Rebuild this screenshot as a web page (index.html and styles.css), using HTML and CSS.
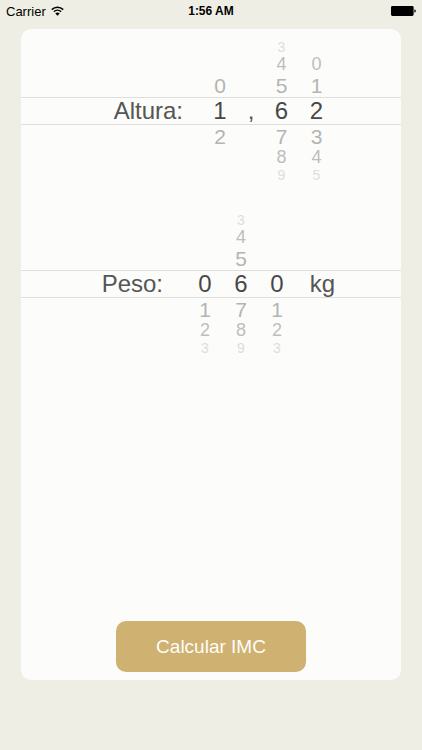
FILE: index.html
```html
<!DOCTYPE html>
<html lang="pt">
<head>
  <meta charset="UTF-8"/>
  <meta name="viewport" content="width=device-width, initial-scale=1.0"/>
  <title>Calcular IMC</title>
  <link rel="stylesheet" href="styles.css">
</head>
<body>

  <!-- Status bar -->
  <header class="status-bar">
    <div class="carrier">
      <span>Carrier</span>
      <svg class="wifi" viewBox="0 0 13 10" aria-hidden="true">
        <path d="M0.8 3.6 A8.2 8.2 0 0 1 12.2 3.6" fill="none" stroke="#000" stroke-width="1.6"/>
        <path d="M2.9 5.8 A5.2 5.2 0 0 1 10.1 5.8" fill="none" stroke="#000" stroke-width="1.5"/>
        <path d="M6.5 9.8 L4.3 7.5 A3.2 3.2 0 0 1 8.7 7.5 Z"/>
      </svg>
    </div>
    <time class="clock">1:56 AM</time>
    <svg class="battery" viewBox="0 0 25 10" aria-hidden="true">
      <rect x="0" y="0" width="22.6" height="10" rx="1.4"/>
      <path d="M23.4 3.2 Q24.9 3.7 24.9 5 Q24.9 6.3 23.4 6.8 Z"/>
    </svg>
  </header>

  <!-- Main Content -->
  <main>
    <form class="card">
      <div class="picker height-picker" role="group" aria-labelledby="alturaLabel">
        <div class="band"></div>
        <span class="name" id="alturaLabel">Altura:</span>
        <div class="wheel col-3" role="radiogroup" aria-label="Metros">
          <label class="up1"><input type="radio" name="m" value="0">0</label>
          <label class="current"><input type="radio" name="m" value="1" checked>1</label>
          <label class="down1"><input type="radio" name="m" value="2">2</label>
        </div>
        <span class="comma">,</span>
        <div class="wheel col-5" role="radiogroup" aria-label="Decímetros">
          <label class="up3"><input type="radio" name="dm" value="3">3</label>
          <label class="up2"><input type="radio" name="dm" value="4">4</label>
          <label class="up1"><input type="radio" name="dm" value="5">5</label>
          <label class="current"><input type="radio" name="dm" value="6" checked>6</label>
          <label class="down1"><input type="radio" name="dm" value="7">7</label>
          <label class="down2"><input type="radio" name="dm" value="8">8</label>
          <label class="down3"><input type="radio" name="dm" value="9">9</label>
        </div>
        <div class="wheel col-6" role="radiogroup" aria-label="Centímetros">
          <label class="up2"><input type="radio" name="cm" value="0">0</label>
          <label class="up1"><input type="radio" name="cm" value="1">1</label>
          <label class="current"><input type="radio" name="cm" value="2" checked>2</label>
          <label class="down1"><input type="radio" name="cm" value="3">3</label>
          <label class="down2"><input type="radio" name="cm" value="4">4</label>
          <label class="down3"><input type="radio" name="cm" value="5">5</label>
        </div>
      </div>

      <div class="picker weight-picker" role="group" aria-labelledby="pesoLabel">
        <div class="band"></div>
        <span class="name" id="pesoLabel">Peso:</span>
        <div class="wheel col-3" role="radiogroup" aria-label="Centenas">
          <label class="current"><input type="radio" name="kg100" value="0" checked>0</label>
          <label class="down1"><input type="radio" name="kg100" value="1">1</label>
          <label class="down2"><input type="radio" name="kg100" value="2">2</label>
          <label class="down3"><input type="radio" name="kg100" value="3">3</label>
        </div>
        <div class="wheel col-4" role="radiogroup" aria-label="Dezenas">
          <label class="up3"><input type="radio" name="kg10" value="3">3</label>
          <label class="up2"><input type="radio" name="kg10" value="4">4</label>
          <label class="up1"><input type="radio" name="kg10" value="5">5</label>
          <label class="current"><input type="radio" name="kg10" value="6" checked>6</label>
          <label class="down1"><input type="radio" name="kg10" value="7">7</label>
          <label class="down2"><input type="radio" name="kg10" value="8">8</label>
          <label class="down3"><input type="radio" name="kg10" value="9">9</label>
        </div>
        <div class="wheel col-5" role="radiogroup" aria-label="Unidades">
          <label class="current"><input type="radio" name="kg1" value="0" checked>0</label>
          <label class="down1"><input type="radio" name="kg1" value="1">1</label>
          <label class="down2"><input type="radio" name="kg1" value="2">2</label>
          <label class="down3"><input type="radio" name="kg1" value="3">3</label>
        </div>
        <span class="unit">kg</span>
      </div>

      <button type="button" class="calc-btn">Calcular IMC</button>
    </form>
  </main>

</body>
</html>
```
FILE: styles.css
```css
* {
  margin: 0;
  padding: 0;
  box-sizing: border-box;
  font-family: 'Liberation Sans', Arial, sans-serif;
}

body {
  min-height: 100vh;
  display: flex;
  flex-direction: column;
  background-color: #eeeee4;
  color: #555;
}

.status-bar {
  display: grid;
  grid-template-columns: 1fr auto 1fr;
  align-items: center;
  height: 22px;
  padding: 0 6px;
  color: #000;
}

.carrier {
  display: flex;
  align-items: center;
  gap: 5px;
  font-size: 13px;
}

.wifi {
  width: 13px;
  height: 10px;
}

.clock {
  font-size: 12px;
  font-weight: bold;
}

.battery {
  width: 25px;
  height: 10px;
  justify-self: end;
}

main {
  flex: 1;
  display: flex;
  padding: 7px 21px 70px;
}

.card {
  flex: 1;
  display: flex;
  flex-direction: column;
  gap: 29px;
  padding: 10px 0 8px;
  border-radius: 10px;
  background-color: #fcfcfa;
}

/* seven rows, getting shorter away from the selected one */
.picker {
  display: grid;
  grid-template-rows: 16px 19px 23px 28px 23px 19px 16px;
  font-size: 24px;
  line-height: 28px;
}

.height-picker {
  grid-template-columns: 1fr 114px 36px 26px 35px 35px 1fr;
}

.weight-picker {
  grid-template-columns: 1fr 100px 36px 36px 36px 40px 1fr;
}

.band {
  grid-row: 4;
  grid-column: 1 / -1;
  border-top: 1px solid #dededc;
  border-bottom: 1px solid #dededc;
}

.name {
  grid-row: 4;
  grid-column: 2;
  text-align: right;
}

.height-picker .name {
  padding-right: 19px;
}

.weight-picker .name {
  padding-right: 24px;
}

.comma {
  grid-row: 4;
  grid-column: 4;
  text-align: center;
}

.unit {
  grid-row: 4;
  grid-column: 6;
  text-align: right;
}

.wheel {
  grid-row: 1 / -1;
  display: grid;
  grid-template-rows: subgrid;
  text-align: center;
}

.col-3 { grid-column: 3; }
.col-4 { grid-column: 4; }
.col-5 { grid-column: 5; }
.col-6 { grid-column: 6; }

.wheel label {
  cursor: pointer;
}

.wheel input {
  position: absolute;
  opacity: 0;
  pointer-events: none;
}

.current {
  grid-row: 4;
  color: #484848;
}

.up1,
.down1 {
  font-size: 21px;
  line-height: 23px;
  color: #b4b4b3;
}

.up2,
.down2 {
  font-size: 18px;
  line-height: 19px;
  color: #bebebd;
}

.up3,
.down3 {
  font-size: 14px;
  line-height: 16px;
  color: #dededd;
}

.up3 { grid-row: 1; }
.up2 { grid-row: 2; }
.up1 { grid-row: 3; }
.down1 { grid-row: 5; }
.down2 { grid-row: 6; }
.down3 { grid-row: 7; }

.calc-btn {
  width: 50%;
  height: 51px;
  margin: auto auto 0;
  border: none;
  border-radius: 10px;
  background-color: #cfb171;
  color: #fffdf8;
  font-size: 19px;
  cursor: pointer;
}

.calc-btn:hover {
  background-color: #c2a462;
}
```
